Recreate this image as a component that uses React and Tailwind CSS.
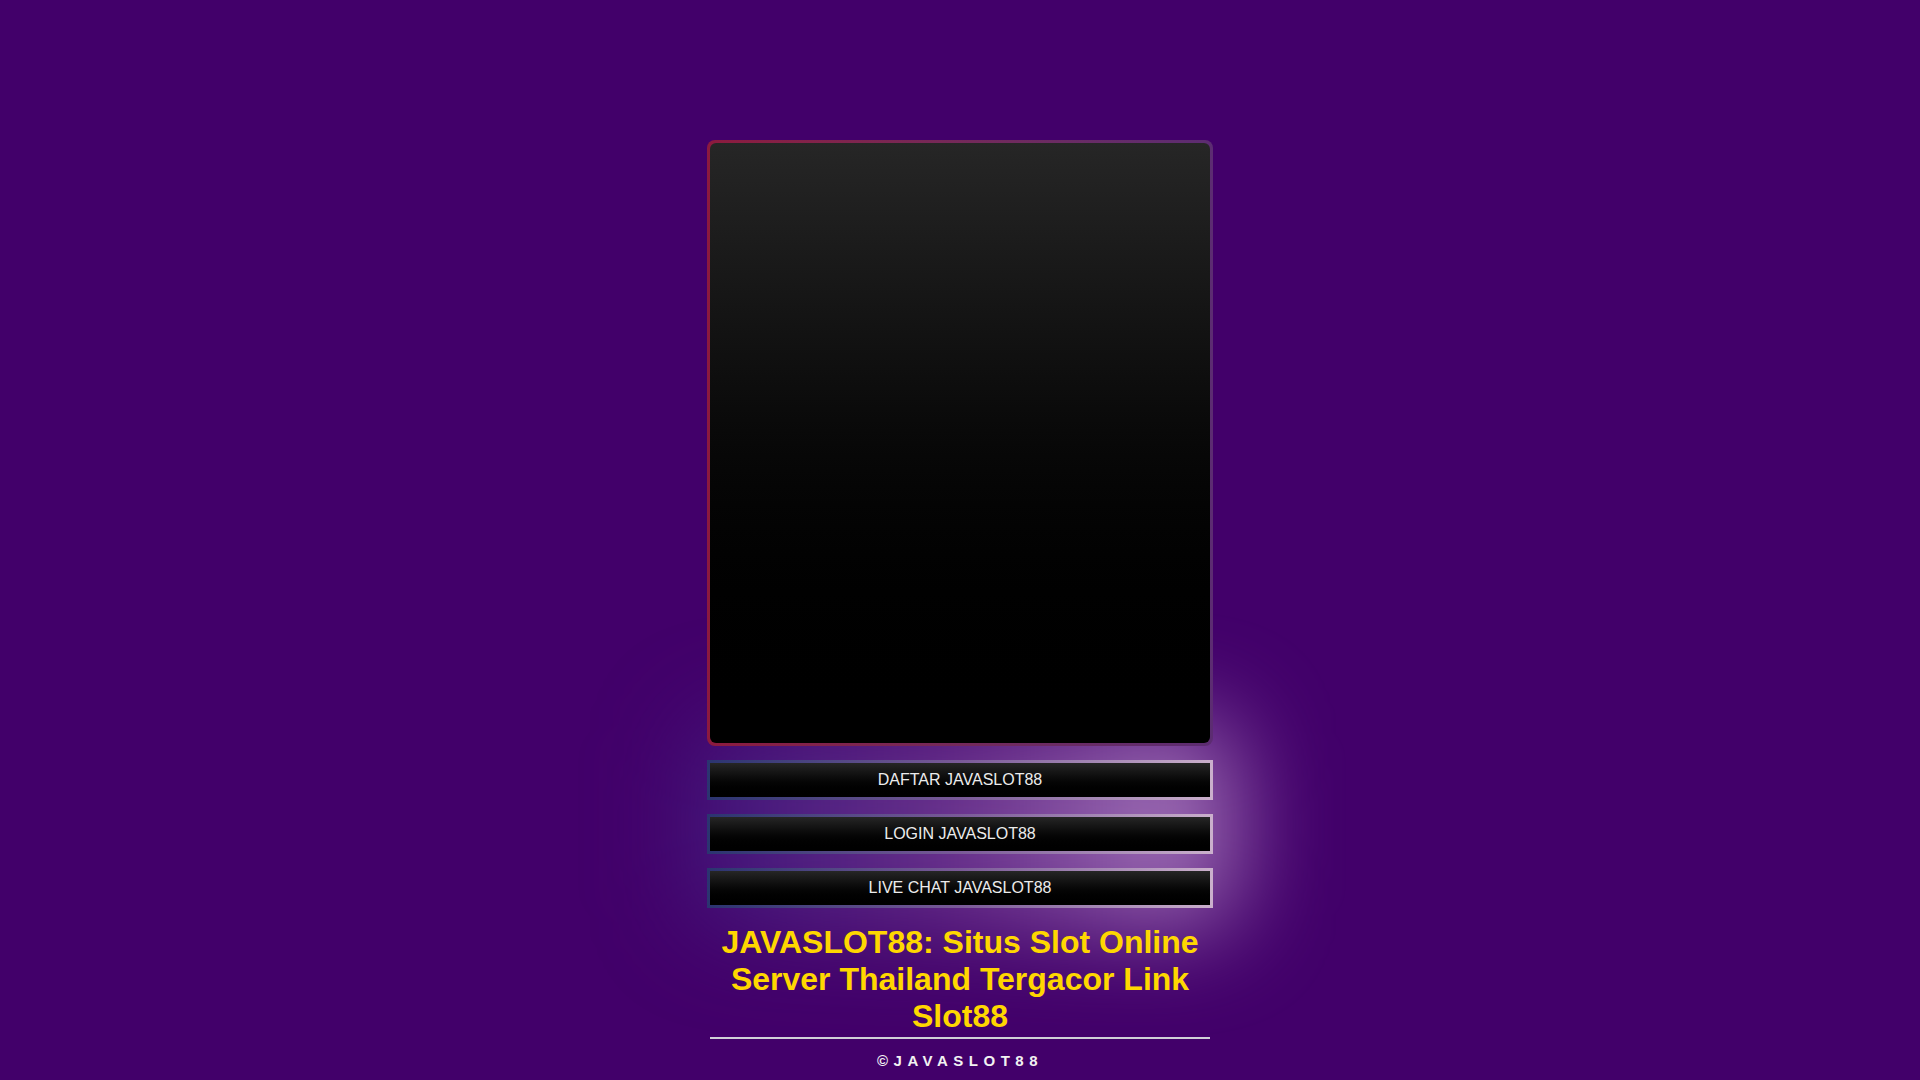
import React from "react";

const links = ["DAFTAR JAVASLOT88", "LOGIN JAVASLOT88", "LIVE CHAT JAVASLOT88"];

const App = () => {
  return (
    <div className="min-h-screen w-full bg-[#42006a] font-['Liberation_Sans',Arial,sans-serif]">
      <div className="mx-auto flex w-[506px] flex-col pt-[140px]">
        {/* Banner box */}
        <div className="relative z-10 rounded-lg bg-gradient-to-r from-[#8c1a3e] to-[#5c2c72] p-[3px]">
          <div className="h-[600px] rounded-md bg-gradient-to-b from-[#262626] to-[#000000]" />
        </div>

        {/* Buttons */}
        <div className="relative mt-[14px] flex flex-col gap-[14px]">
          {/* glow behind the buttons */}
          <div className="pointer-events-none absolute -inset-x-[20px] -top-[40px] -bottom-[20px] rounded-[40px] bg-gradient-to-r from-[#3a2a8a]/45 via-[#8a5aa8]/55 to-[#d0a8dc]/75 blur-[48px]" />
          {links.map((label) => (
            <a
              key={label}
              href="#"
              className="relative block bg-gradient-to-r from-[#2b3470] via-[#7a5a98] to-[#cbb0cc] p-[3px]"
            >
              <div className="flex h-[34px] items-center justify-center bg-gradient-to-b from-[#262626] to-[#000000] text-[16px] text-[#ececec]">
                {label}
              </div>
            </a>
          ))}
        </div>

        <h1 className="relative mt-[16px] text-center text-[32px] font-bold leading-[37px] text-[#ffd700]">
          JAVASLOT88: Situs Slot Online Server Thailand Tergacor Link Slot88
        </h1>

        <div className="mx-auto mt-[2px] h-[2px] w-[500px] bg-[#d0d0d8]" />

        <p className="mt-[12px] text-center text-[15px] font-bold leading-[20px] tracking-[5.5px] text-[#f2f2f2]">
          ©JAVASLOT88
        </p>
      </div>
    </div>
  );
};

export default App;
